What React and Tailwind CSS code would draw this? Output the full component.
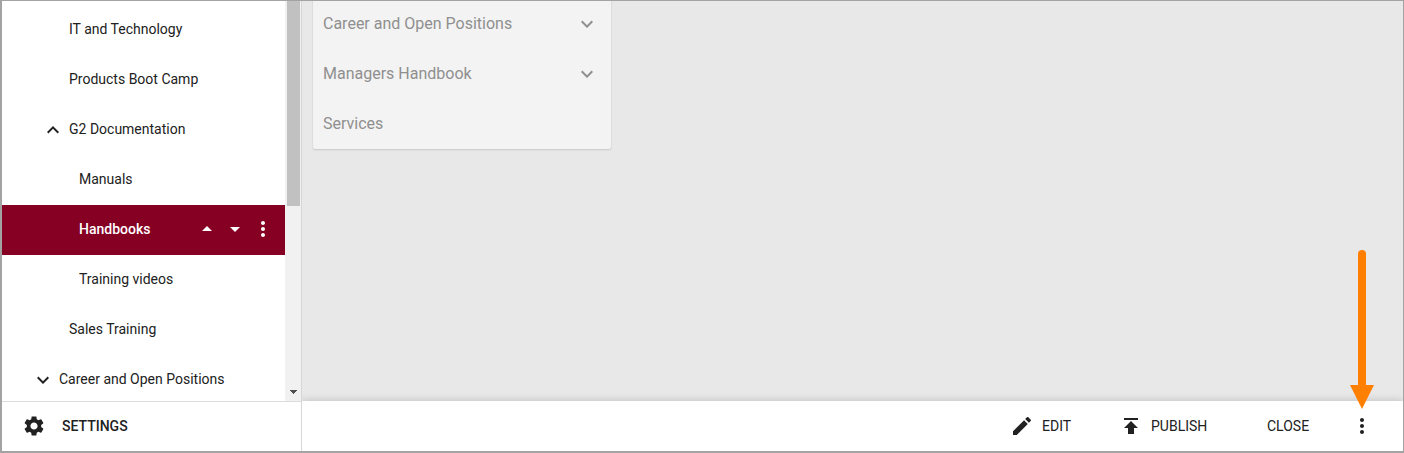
const ICONS = {
  up: 'M12 8l-6 6 1.41 1.41L12 10.83l4.59 4.58L18 14z',
  down: 'M16.59 8.59L12 13.17 7.41 8.59 6 10l6 6 6-6z',
  more: 'M12 8c1.1 0 2-.9 2-2s-.9-2-2-2-2 .9-2 2 .9 2 2 2zm0 2c-1.1 0-2 .9-2 2s.9 2 2 2 2-.9 2-2-.9-2-2-2zm0 6c-1.1 0-2 .9-2 2s.9 2 2 2 2-.9 2-2-.9-2-2-2z',
  dropUp: 'M7 14l5-5 5 5z',
  dropDown: 'M7 10l5 5 5-5z',
  edit: 'M3 17.25V21h3.75L17.81 9.94l-3.75-3.75L3 17.25zM20.71 7.04c.39-.39.39-1.02 0-1.41l-2.34-2.34c-.39-.39-1.02-.39-1.41 0l-1.83 1.83 3.75 3.75 1.83-1.83z',
  publish: 'M5 4v2h14V4H5zm0 10h4v6h6v-6h4l-7-7-7 7z',
  settings:
    'M19.14 12.94c.04-.3.06-.61.06-.94 0-.32-.02-.64-.07-.94l2.03-1.58c.18-.14.23-.41.12-.61l-1.92-3.32c-.12-.22-.37-.29-.59-.22l-2.39.96c-.5-.38-1.03-.7-1.62-.94l-.36-2.54c-.04-.24-.24-.41-.48-.41h-3.84c-.24 0-.43.17-.47.41l-.36 2.54c-.59.24-1.13.57-1.62.94l-2.39-.96c-.22-.08-.47 0-.59.22L2.74 8.87c-.12.21-.08.47.12.61l2.03 1.58c-.05.3-.09.63-.09.94s.02.64.07.94l-2.03 1.58c-.18.14-.23.41-.12.61l1.92 3.32c.12.22.37.29.59.22l2.39-.96c.5.38 1.03.7 1.62.94l.36 2.54c.05.24.24.41.48.41h3.84c.24 0 .44-.17.47-.41l.36-2.54c.59-.24 1.13-.56 1.62-.94l2.39.96c.22.08.47 0 .59-.22l1.92-3.32c.12-.22.07-.47-.12-.61l-2.01-1.58zM12 15.6c-1.98 0-3.6-1.62-3.6-3.6s1.62-3.6 3.6-3.6 3.6 1.62 3.6 3.6-1.62 3.6-3.6 3.6z',
};

function Icon({ name, className = 'size-6' }) {
  return (
    <svg viewBox="0 0 24 24" fill="currentColor" className={`shrink-0 ${className}`}>
      <path d={ICONS[name]} />
    </svg>
  );
}

const TREE = [
  { label: 'IT and Technology', pad: 'pl-[43px]' },
  { label: 'Products Boot Camp', pad: 'pl-[43px]' },
  { label: 'G2 Documentation', pad: 'pl-[39px]', icon: 'up' },
  { label: 'Manuals', pad: 'pl-[53px]' },
  { label: 'Handbooks', pad: 'pl-[53px]', selected: true },
  { label: 'Training videos', pad: 'pl-[53px]' },
  { label: 'Sales Training', pad: 'pl-[43px]' },
  { label: 'Career and Open Positions', pad: 'pl-[29px]', icon: 'down' },
];

function TreeRow({ label, pad, icon, selected }) {
  return (
    <div className={`flex h-[50px] shrink-0 items-center pr-2.5 pb-0.5 ${pad} ${selected ? 'bg-[#850023] text-white' : ''}`}>
      {icon ? <Icon name={icon} className="mr-1 mt-px size-6" /> : <span className="w-6 shrink-0" />}
      <span className={`whitespace-nowrap leading-5 ${selected ? 'font-medium' : ''}`}>{label}</span>
      {selected && (
        <div className="ml-auto flex items-center gap-1">
          <Icon name="dropUp" />
          <Icon name="dropDown" />
          <Icon name="more" />
        </div>
      )}
    </div>
  );
}

function Sidebar() {
  return (
    <aside className="z-10 flex w-[300px] shrink-0 flex-col border-r border-[#d6d6d6] bg-white">
      <div className="flex h-[400px] shrink-0 overflow-hidden">
        <nav className="flex w-[283px] flex-col pt-1">
          {TREE.map((row) => (
            <TreeRow key={row.label} {...row} />
          ))}
        </nav>
        <div className="flex w-4 flex-col items-center justify-between bg-[#f1f1f1]">
          <div className="ml-px h-[205px] w-[13px] self-center bg-[#c1c1c1]" />
          <svg viewBox="0 0 7 4" className="mb-[7px] h-1 w-[7px]" fill="#505050" shapeRendering="crispEdges">
            <path d="M0 0h7v1h-1v1h-1v1h-1v1h-1v-1h-1v-1h-1v-1h-1z" />
          </svg>
        </div>
      </div>
      <button className="flex grow items-center border-t border-[#dcdcdc] pb-px pl-5 font-medium">
        <Icon name="settings" />
        <span className="ml-4">SETTINGS</span>
      </button>
    </aside>
  );
}

const SECTIONS = [
  { label: 'Career and Open Positions', open: true },
  { label: 'Managers Handbook', open: true },
  { label: 'Services' },
];

export default function App() {
  return (
    <div className="flex h-[453px] w-[1404px] overflow-hidden border-t border-r border-b-2 border-l-2 border-[#a3a3a3] bg-white font-['Roboto',sans-serif] text-sm text-[#212121]">
      <Sidebar />
      <main className="flex min-w-0 grow flex-col">
        <div className="h-[400px] shrink-0 overflow-hidden bg-[#e8e8e8] pl-[11px]">
          <div className="-mt-2 w-[298px] rounded-xs bg-[#f3f3f3] pt-1.5 text-base text-[#8f8f8f] shadow-[0_1px_2px_rgba(0,0,0,0.13),0_0_1px_rgba(0,0,0,0.12)]">
            {SECTIONS.map(({ label, open }) => (
              <div key={label} className="flex h-[50px] items-center justify-between pr-3 pl-2.5">
                <span>{label}</span>
                {open && <Icon name="down" className="mb-px size-6" />}
              </div>
            ))}
          </div>
        </div>
        <footer className="relative flex grow items-center bg-white pl-[708px] shadow-[0_0_8px_rgba(0,0,0,0.2)]">
          <button className="flex w-[109px] items-center">
            <Icon name="edit" />
            <span className="ml-2">EDIT</span>
          </button>
          <button className="flex w-[148px] items-center">
            <Icon name="publish" />
            <span className="ml-2">PUBLISH</span>
          </button>
          <button className="w-[83px] text-left">CLOSE</button>
          <Icon name="more" />
        </footer>
      </main>
      <svg viewBox="0 0 24 160" className="absolute top-[249px] left-[1350px] h-[160px] w-6" fill="#ff8000">
        <path d="M8 5a4 4 0 0 1 8 0v131h8l-12 24l-12-24h8z" />
      </svg>
    </div>
  );
}
